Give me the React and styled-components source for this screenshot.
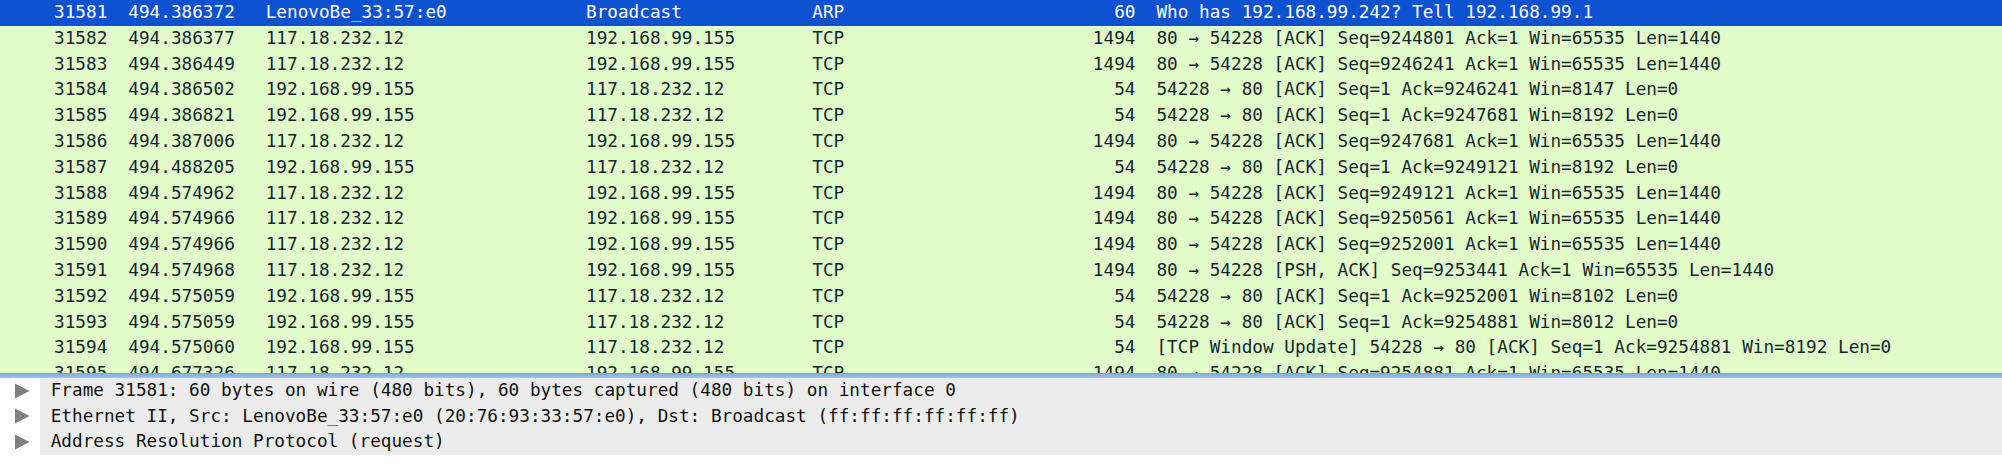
import styled, { createGlobalStyle } from "styled-components";

const GlobalStyle = createGlobalStyle`
  html, body {
    margin: 0;
    padding: 0;
    background: #ffffff;
  }
`;

const packets = [
  ["31581", "494.386372", "LenovoBe_33:57:e0", "Broadcast", "ARP", "60", "Who has 192.168.99.242? Tell 192.168.99.1"],
  ["31582", "494.386377", "117.18.232.12", "192.168.99.155", "TCP", "1494", "80 → 54228 [ACK] Seq=9244801 Ack=1 Win=65535 Len=1440"],
  ["31583", "494.386449", "117.18.232.12", "192.168.99.155", "TCP", "1494", "80 → 54228 [ACK] Seq=9246241 Ack=1 Win=65535 Len=1440"],
  ["31584", "494.386502", "192.168.99.155", "117.18.232.12", "TCP", "54", "54228 → 80 [ACK] Seq=1 Ack=9246241 Win=8147 Len=0"],
  ["31585", "494.386821", "192.168.99.155", "117.18.232.12", "TCP", "54", "54228 → 80 [ACK] Seq=1 Ack=9247681 Win=8192 Len=0"],
  ["31586", "494.387006", "117.18.232.12", "192.168.99.155", "TCP", "1494", "80 → 54228 [ACK] Seq=9247681 Ack=1 Win=65535 Len=1440"],
  ["31587", "494.488205", "192.168.99.155", "117.18.232.12", "TCP", "54", "54228 → 80 [ACK] Seq=1 Ack=9249121 Win=8192 Len=0"],
  ["31588", "494.574962", "117.18.232.12", "192.168.99.155", "TCP", "1494", "80 → 54228 [ACK] Seq=9249121 Ack=1 Win=65535 Len=1440"],
  ["31589", "494.574966", "117.18.232.12", "192.168.99.155", "TCP", "1494", "80 → 54228 [ACK] Seq=9250561 Ack=1 Win=65535 Len=1440"],
  ["31590", "494.574966", "117.18.232.12", "192.168.99.155", "TCP", "1494", "80 → 54228 [ACK] Seq=9252001 Ack=1 Win=65535 Len=1440"],
  ["31591", "494.574968", "117.18.232.12", "192.168.99.155", "TCP", "1494", "80 → 54228 [PSH, ACK] Seq=9253441 Ack=1 Win=65535 Len=1440"],
  ["31592", "494.575059", "192.168.99.155", "117.18.232.12", "TCP", "54", "54228 → 80 [ACK] Seq=1 Ack=9252001 Win=8102 Len=0"],
  ["31593", "494.575059", "192.168.99.155", "117.18.232.12", "TCP", "54", "54228 → 80 [ACK] Seq=1 Ack=9254881 Win=8012 Len=0"],
  ["31594", "494.575060", "192.168.99.155", "117.18.232.12", "TCP", "54", "[TCP Window Update] 54228 → 80 [ACK] Seq=1 Ack=9254881 Win=8192 Len=0"],
  ["31595", "494.677326", "117.18.232.12", "192.168.99.155", "TCP", "1494", "80 → 54228 [ACK] Seq=9254881 Ack=1 Win=65535 Len=1440"],
];

const details = [
  "Frame 31581: 60 bytes on wire (480 bits), 60 bytes captured (480 bits) on interface 0",
  "Ethernet II, Src: LenovoBe_33:57:e0 (20:76:93:33:57:e0), Dst: Broadcast (ff:ff:ff:ff:ff:ff)",
  "Address Resolution Protocol (request)",
];

export default function App() {
  return (
    <Window>
      <GlobalStyle />
      <PacketList>
        {packets.map((p, i) => (
          <PacketRow key={p[0]} selected={i === 0}>
            <NumCell>{p[0]}</NumCell>
            <Cell>{p[1]}</Cell>
            <Cell>{p[2]}</Cell>
            <Cell>{p[3]}</Cell>
            <Cell>{p[4]}</Cell>
            <NumCell>{p[5]}</NumCell>
            <Cell>{p[6]}</Cell>
          </PacketRow>
        ))}
      </PacketList>
      <Splitter />
      <DetailPane>
        {details.map((d) => (
          <DetailRow key={d}>
            <Expander>
              <svg width="15" height="16" viewBox="0 0 15 16">
                <polygon points="0,0.5 14.5,8 0,15.5" fill="#7f7f7f" />
              </svg>
            </Expander>
            <DetailText>{d}</DetailText>
          </DetailRow>
        ))}
      </DetailPane>
    </Window>
  );
}

const Window = styled.div`
  width: 2002px;
  height: 466px;
  overflow: hidden;
  font-family: "DejaVu Sans Mono", "Liberation Mono", monospace;
  font-size: 17.7px;
  color: #12272e;
`;

const PacketList = styled.div`
  height: 373px;
  overflow: hidden;
  background: #e2fdc9;
`;

const PacketRow = styled.div`
  display: grid;
  grid-template-columns: 128.3px 137.4px 320.3px 226.3px 200px 144.2px 1fr;
  height: 25.8px;
  line-height: 25.8px;
  white-space: nowrap;
  background: ${(p) => (p.selected ? "#0b51d0" : "#e2fdc9")};
  color: ${(p) => (p.selected ? "#ffffff" : "#12272e")};
`;

const Cell = styled.div`
  overflow: hidden;
`;

const NumCell = styled(Cell)`
  text-align: right;
  padding-right: 21px;
`;

const Splitter = styled.div`
  height: 5px;
  background: linear-gradient(#7aa3e2, #a9c4ee);
`;

const DetailPane = styled.div`
  padding-bottom: 11px;
`;

const DetailRow = styled.div`
  display: flex;
  height: 25.5px;
  line-height: 25.5px;
  white-space: nowrap;
`;

const Expander = styled.div`
  width: 40px;
  flex: none;
  display: flex;
  align-items: center;
  padding-left: 15px;
  box-sizing: border-box;
  background: #ffffff;
`;

const DetailText = styled.div`
  flex: 1;
  padding-left: 10.7px;
  background: #ececec;
  color: #111111;
`;
